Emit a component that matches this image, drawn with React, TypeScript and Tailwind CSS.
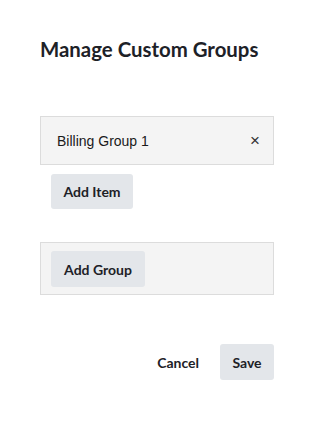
import React, { useState } from 'react';

export default function App() {
  const [groups, setGroups] = useState<string[][]>([['Billing Group 1']]);

  const removeItem = (g: number, i: number) =>
    setGroups(gs => gs.map((items, idx) => (idx === g ? items.filter((_, j) => j !== i) : items)));

  return (
    <div className="min-h-[421px] w-[313px] bg-white pl-10 pr-[39px] pt-[35px] text-[#1d2127] font-['Lato',sans-serif]">
      <h1 className="text-[20.4px] leading-[28px] font-bold">Manage Custom Groups</h1>

      <div className="mt-[53px]">
        {groups.map((items, g) => (
          <div key={g}>
            {items.map((item, i) => (
              <div
                key={i}
                className="flex h-[49px] items-center justify-between border border-[#dcdcdc] bg-[#f4f4f4] pl-4 pr-[13px]"
              >
                <span className="font-['Liberation_Sans',Arial,sans-serif] text-[14px] leading-5 text-[#1a1a1a]">
                  {item}
                </span>
                <button
                  onClick={() => removeItem(g, i)}
                  className="font-['Liberation_Sans',Arial,sans-serif] text-[17px] leading-5 text-[#333]"
                >
                  ×
                </button>
              </div>
            ))}
            <button className="ml-[11px] mt-[9px] flex h-[35px] w-[82px] items-center justify-center rounded-[3px] bg-[#e3e6ea] text-[14px] font-bold">
              Add Item
            </button>
          </div>
        ))}
      </div>

      <div className="mt-[33px] flex h-[53px] items-start border border-[#dcdcdc] bg-[#f4f4f4] pl-[10px] pt-2">
        <button
          onClick={() => setGroups(gs => [...gs, []])}
          className="flex h-9 w-[94px] items-center justify-center rounded-[3px] bg-[#e3e6ea] text-[14px] font-bold"
        >
          Add Group
        </button>
      </div>

      <div className="mt-[49px] flex items-center justify-end gap-[9px]">
        <button className="flex h-9 items-center px-3 text-[14px] font-bold">Cancel</button>
        <button className="flex h-9 w-[54px] items-center justify-center rounded-[3px] bg-[#e3e6ea] text-[14px] font-bold">
          Save
        </button>
      </div>
    </div>
  );
}
